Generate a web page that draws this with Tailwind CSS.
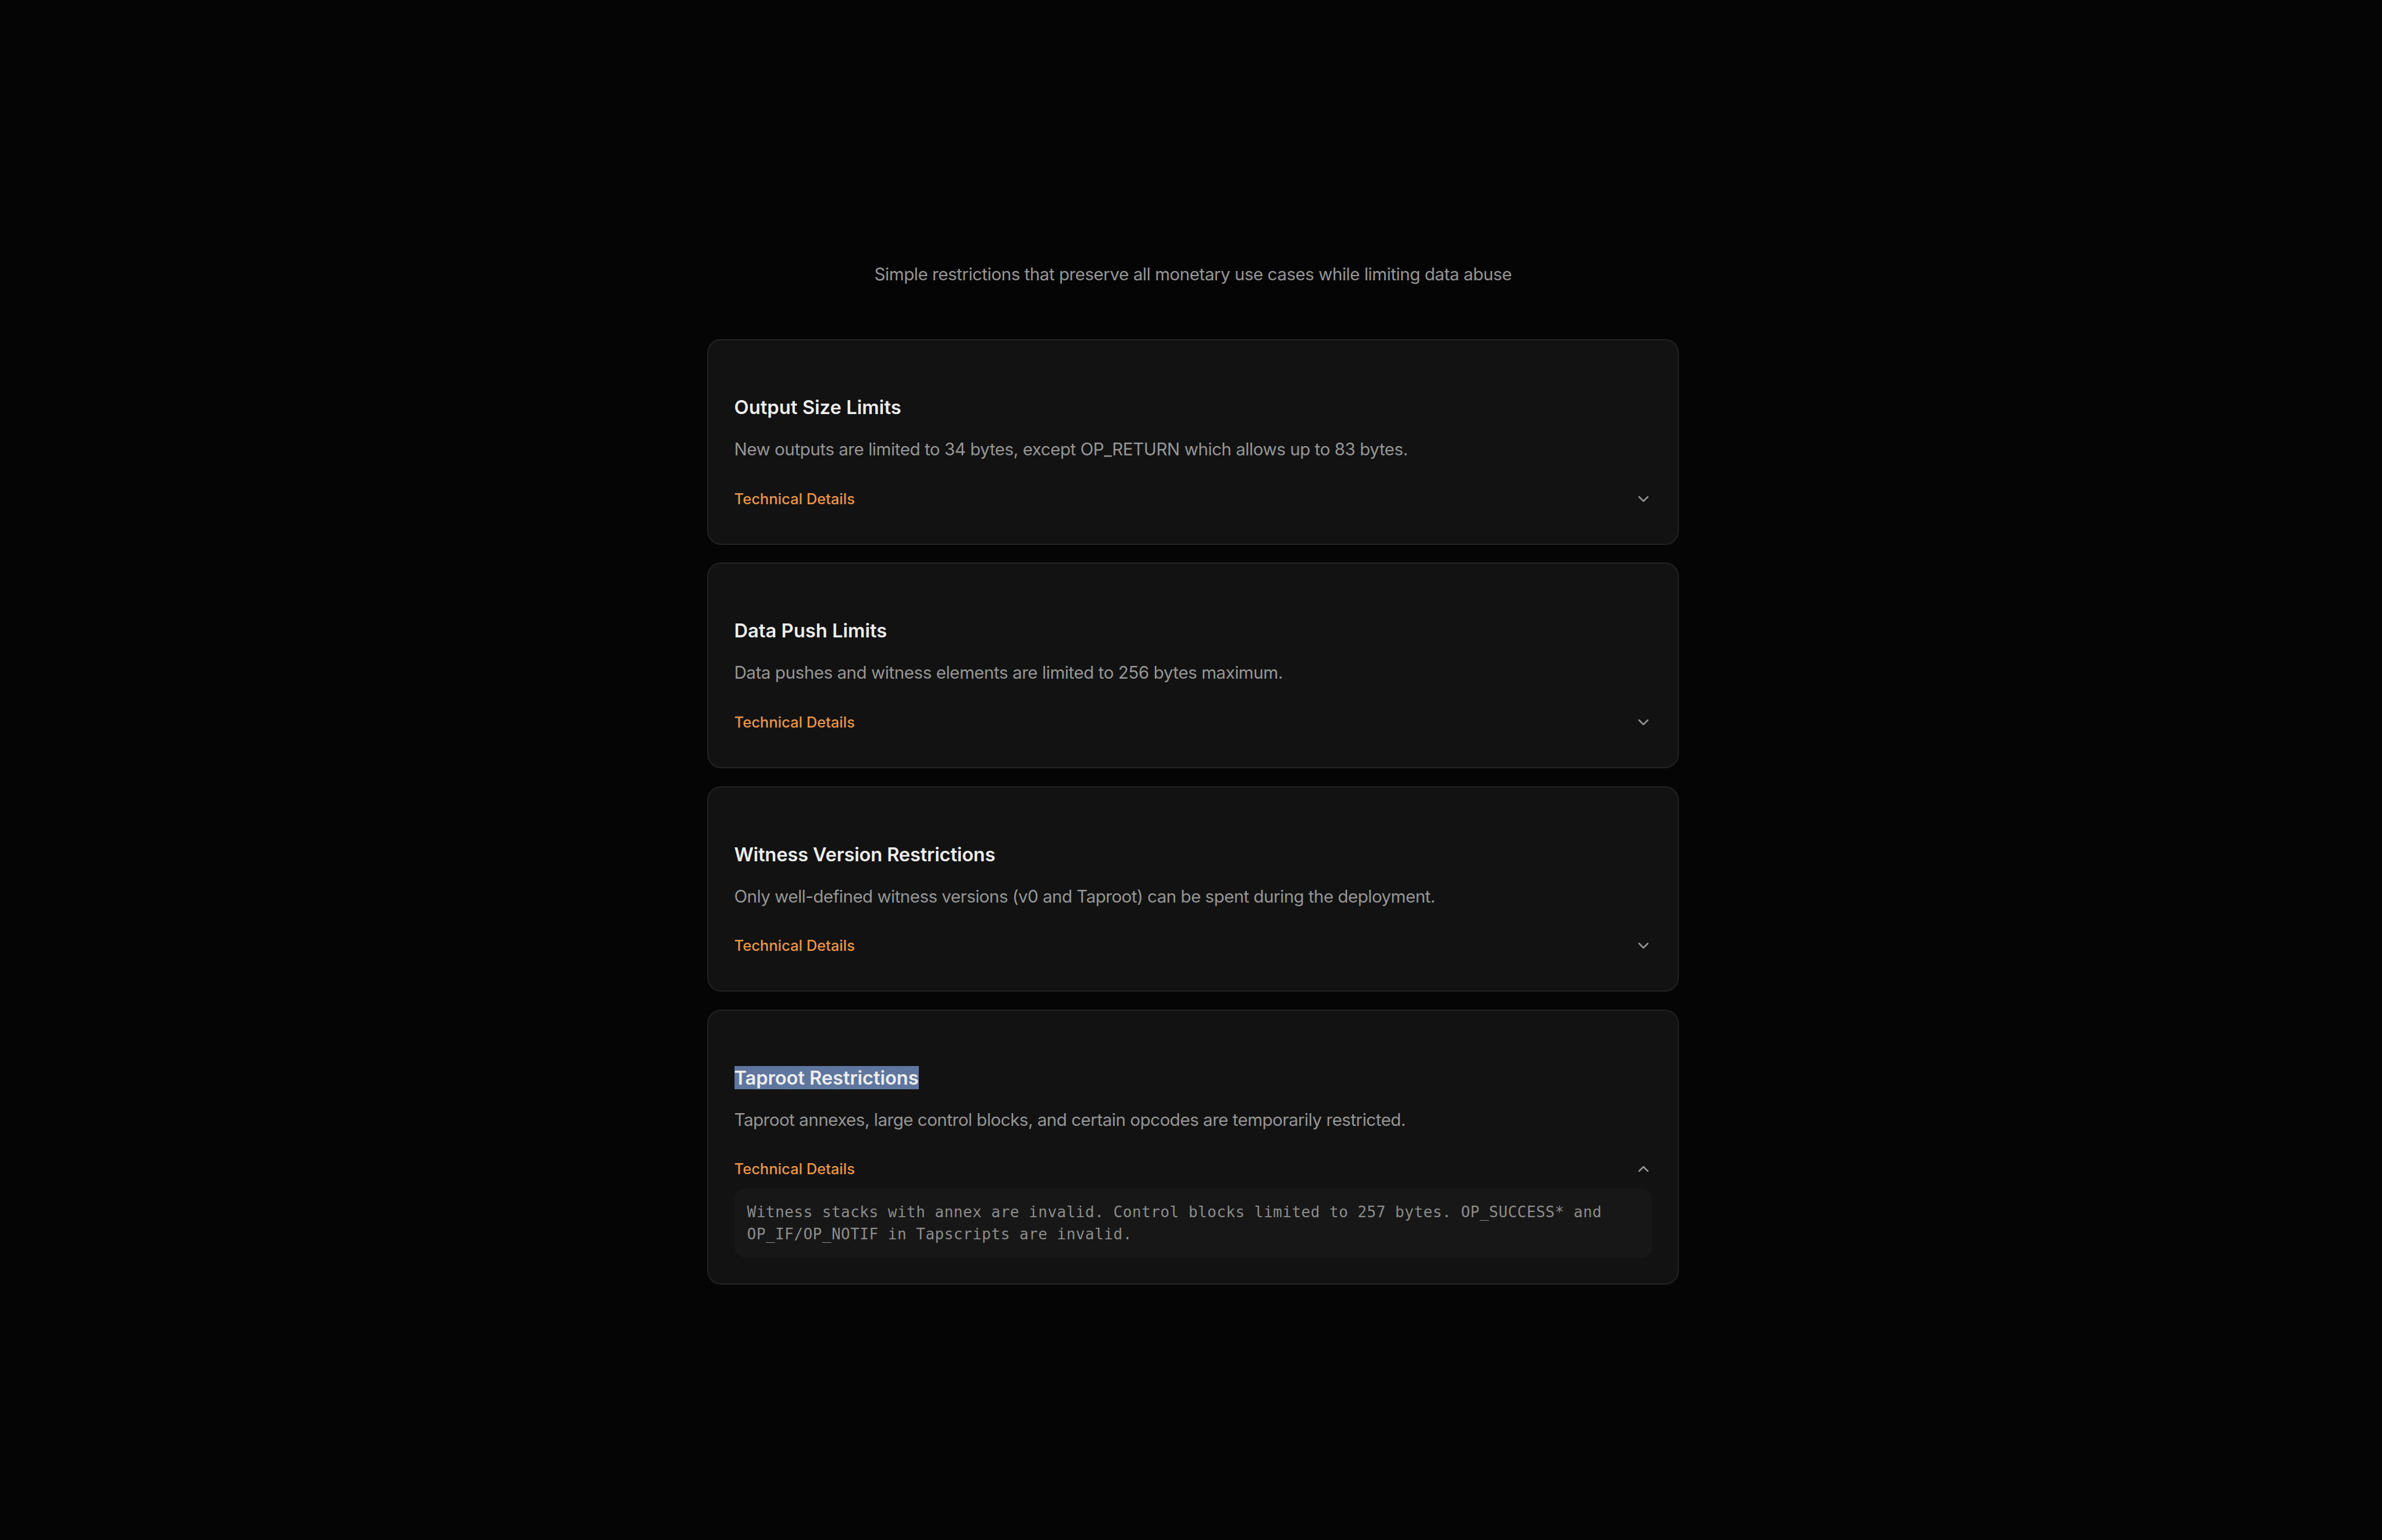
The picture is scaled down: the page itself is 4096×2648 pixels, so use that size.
<!DOCTYPE html>
<html lang="en">
<head>
<meta charset="utf-8">
<title>Restrictions</title>
<script src="https://cdn.jsdelivr.net/npm/@tailwindcss/browser@4"></script>
</head>
<body class="min-h-screen bg-[#050505] font-['Inter',sans-serif] text-[#969696]">
<main class="ml-[1216px] w-[1671px] pt-[447px]">
  <p class="mb-[88px] text-center text-[29.5px] leading-[48px] tracking-[-0.45px] whitespace-nowrap">Simple restrictions that preserve all monetary use cases while limiting data abuse</p>
  <div class="flex flex-col gap-[30.7px]">

    <article class="rounded-[24px] border-2 border-[#222222] bg-[#121212] px-[44.5px] pt-[95px] pb-[44px]">
      <h3 class="text-[32.6px] leading-[40px] font-semibold tracking-[0.1px] text-[#ededed]">Output Size Limits</h3>
      <p class="mt-[28px] text-[29.5px] leading-[48px] tracking-[-0.43px] whitespace-nowrap">New outputs are limited to 34 bytes, except OP_RETURN which allows up to 83 bytes.</p>
      <div class="mt-[41.6px] flex items-center justify-between pb-[13px]">
        <span class="text-[25.5px] leading-[40px] font-medium text-[#e8964a]">Technical Details</span>
        <svg class="size-[30px]" viewBox="0 0 24 24" fill="none" stroke="currentColor" stroke-width="2" stroke-linecap="round" stroke-linejoin="round"><path d="M6 9l6 6 6-6"/></svg>
      </div>
    </article>

    <article class="rounded-[24px] border-2 border-[#222222] bg-[#121212] px-[44.5px] pt-[95px] pb-[44px]">
      <h3 class="text-[32.6px] leading-[40px] font-semibold tracking-[0.06px] text-[#ededed]">Data Push Limits</h3>
      <p class="mt-[28px] text-[29.5px] leading-[48px] tracking-[-0.43px] whitespace-nowrap">Data pushes and witness elements are limited to 256 bytes maximum.</p>
      <div class="mt-[41.6px] flex items-center justify-between pb-[13px]">
        <span class="text-[25.5px] leading-[40px] font-medium text-[#e8964a]">Technical Details</span>
        <svg class="size-[30px]" viewBox="0 0 24 24" fill="none" stroke="currentColor" stroke-width="2" stroke-linecap="round" stroke-linejoin="round"><path d="M6 9l6 6 6-6"/></svg>
      </div>
    </article>

    <article class="rounded-[24px] border-2 border-[#222222] bg-[#121212] px-[44.5px] pt-[95px] pb-[44px]">
      <h3 class="text-[32.6px] leading-[40px] font-semibold tracking-[-0.14px] text-[#ededed]">Witness Version Restrictions</h3>
      <p class="mt-[28px] text-[29.5px] leading-[48px] tracking-[-0.51px] whitespace-nowrap">Only well-defined witness versions (v0 and Taproot) can be spent during the deployment.</p>
      <div class="mt-[41.6px] flex items-center justify-between pb-[13px]">
        <span class="text-[25.5px] leading-[40px] font-medium text-[#e8964a]">Technical Details</span>
        <svg class="size-[30px]" viewBox="0 0 24 24" fill="none" stroke="currentColor" stroke-width="2" stroke-linecap="round" stroke-linejoin="round"><path d="M6 9l6 6 6-6"/></svg>
      </div>
    </article>

    <article class="rounded-[24px] border-2 border-[#222222] bg-[#121212] px-[44.5px] pt-[95px] pb-[44px]">
      <h3 class="text-[32.6px] leading-[40px] font-semibold tracking-[-0.03px] text-[#ededed]"><span class="bg-[#5f779e]">Taproot Restrictions</span></h3>
      <p class="mt-[28px] text-[29.5px] leading-[48px] tracking-[-0.48px] whitespace-nowrap">Taproot annexes, large control blocks, and certain opcodes are temporarily restricted.</p>
      <div class="mt-[41.6px] flex items-center justify-between pb-[13px]">
        <span class="text-[25.5px] leading-[40px] font-medium text-[#e8964a]">Technical Details</span>
        <svg class="size-[30px]" viewBox="0 0 24 24" fill="none" stroke="currentColor" stroke-width="2" stroke-linecap="round" stroke-linejoin="round"><path d="M6 15l6-6 6 6"/></svg>
      </div>
      <div class="h-[119.7px] rounded-[20px] bg-[#171717] px-[22px] pt-[23px] font-['DejaVu_Sans_Mono',monospace] text-[26px] leading-[37.1px] tracking-[0.5px] whitespace-nowrap text-[#8c8c8c]">Witness stacks with annex are invalid. Control blocks limited to 257 bytes. OP_SUCCESS* and<br>OP_IF/OP_NOTIF in Tapscripts are invalid.</div>
    </article>

  </div>
</main>
</body>
</html>
